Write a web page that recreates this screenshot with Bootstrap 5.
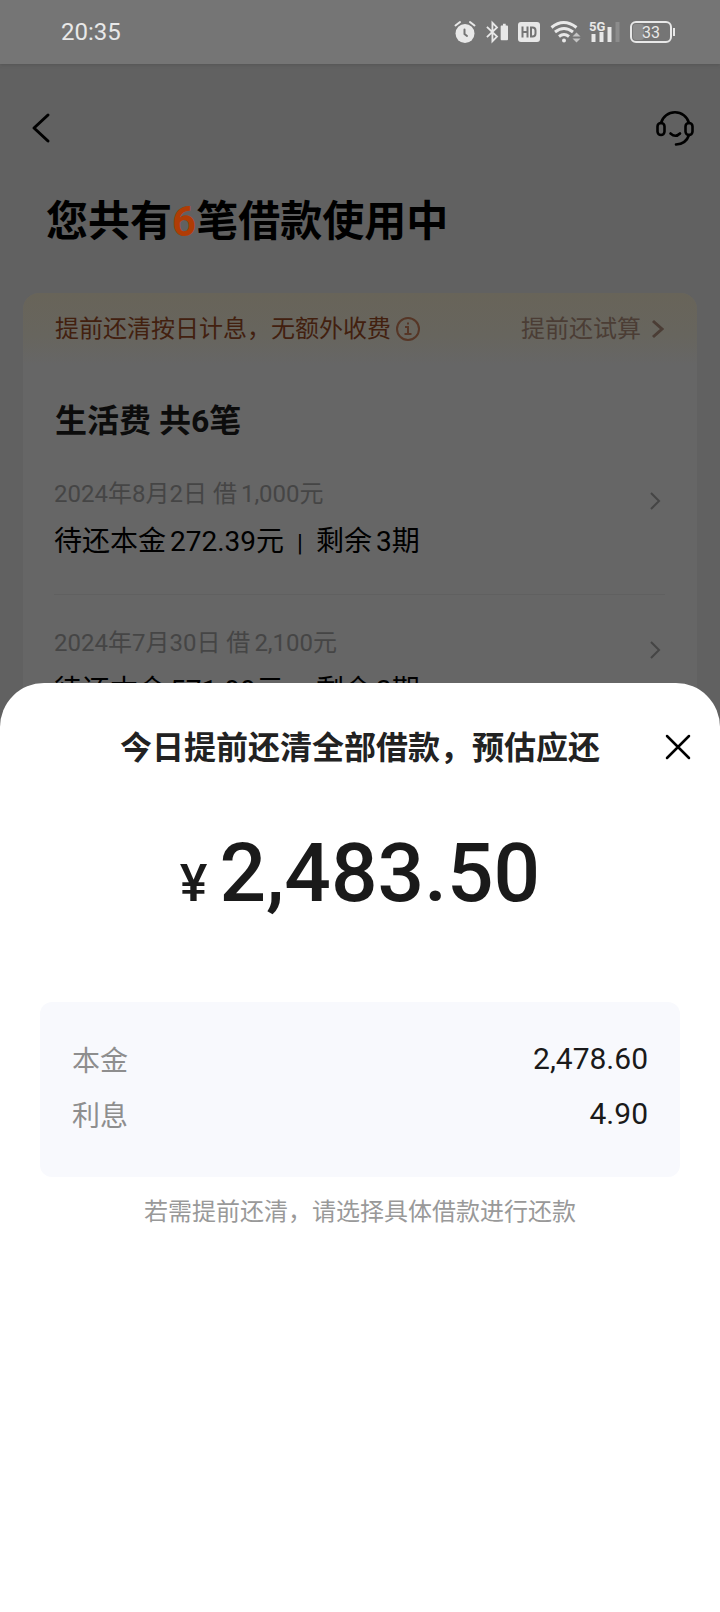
<!DOCTYPE html>
<html lang="zh-CN">
<head>
<meta charset="utf-8">
<meta name="viewport" content="width=device-width, initial-scale=1">
<title>借款</title>
<link rel="stylesheet" href="https://cdn.jsdelivr.net/npm/bootstrap@5.3.0/dist/css/bootstrap.min.css">
<style>
  body { background: #616161; color: #000; font-family: Roboto, "Noto Sans CJK SC", sans-serif; overflow: hidden; }
  svg { display: block; flex: none; fill: none; overflow: visible; }
  .statusbar { background: #757575; height: 64px; padding: 0 44px 0 61px; color: #e8e8e8; font-size: 24px; box-shadow: 0 1px 3px #555; }
  .statusbar .status-icons { gap: 10px; }
  .topbar { height: 130px; padding: 0 25px 2px 28px; }
  .page-title { font-size: 42px; line-height: 56px; padding: 0 46px; margin: 0 0 43px; font-weight: 700; }
  .page-title span { color: #b03c05; }
  .loans { margin: 0 23px; background: #666; border-radius: 16px; overflow: hidden; height: 600px; }
  .notice { height: 72px; padding: 0 32px; font-size: 24px; color: #42200f; background: linear-gradient(#686459, #67655e 60%, #666); }
  .notice a { color: #4b3d35; gap: 10px; }
  .loans h2 { font-size: 32px; line-height: 44px; font-weight: 700; margin: 0; padding: 34px 32px 26px; color: #0c0c0c; }
  .loan { margin: 0 32px 0 31px; height: 149px; padding: 9px 4px 0 0; color: #000; }
  .loan + .loan { border-top: 1px solid #606060; padding-top: 32px; }
  .loan .date { font-size: 24px; line-height: 32px; color: #454545; }
  .loan .rest { font-size: 28px; line-height: 40px; margin-top: 12px; }
  .loan .num { padding-left: 4px; }
  .loan .bar { font-size: 24px; padding: 0 13px; }
  .loans .first-loan { height: 125px; }
  .loan svg { margin-top: 14px; }
  .sheet { background: #fff; color: #1a1a1a; border-radius: 44px 44px 0 0; padding: 40px 40px 384px; }
  .sheet-title { font-size: 32px; line-height: 50px; font-weight: 700; margin: 0; color: #222; }
  .close-btn { right: 22px; top: 44px; padding: 8px; }
  .amount { font-size: 82px; line-height: 100px; font-weight: 500; margin: 50px 0 68px; }
  .amount span { font-size: 52px; margin-right: 12px; }
  .detail { background: #f8f9fd; border-radius: 12px; padding: 32px; height: 175px; font-size: 28px; line-height: 55px; }
  .detail dt { font-weight: 400; color: #8e8e8e; }
  .detail dd { margin: 0; font-size: 30px; line-height: 50px; }
  .hint { font-size: 24px; line-height: 32px; color: #999; margin: 19px 0 0; }
</style>
</head>
<body>
<header class="statusbar d-flex align-items-center justify-content-between">
  <time>20:35</time>
  <div class="status-icons d-flex align-items-center">
    <svg width="22" height="24" viewBox="0 0 22 24" stroke="#e8e8e8" stroke-width="2" stroke-linecap="round"><circle cx="11" cy="13.500" r="9.500" fill="#e8e8e8" stroke="none"/><path d="M1.500 5.500 6 2M20.500 5.500 16 2"/><path d="M10.500 9.500v4.500l2.500 2" stroke="#757575"/></svg>
    <svg width="22" height="24" viewBox="0 0 24 24" stroke="#e8e8e8" stroke-width="2"><path d="M1 6.500 12 17l-5 5V2l5 5L1 17.500"/><path d="M17 5h1.500V3h3v2H23q1 0 1 1v14q0 1-1 1h-6q-1 0-1-1V6q0-1 1-1z" fill="#e8e8e8" stroke="none"/></svg>
    <svg width="22" height="20" viewBox="0 0 22 20"><rect width="22" height="20" rx="3" fill="#e8e8e8"/><path d="M4.500 4.500v11M9.500 4.500v11M4.500 10h5M13 5.500v9h1.500q3 0 3-3v-3q0-3-3-3z" stroke="#757575" stroke-width="2"/></svg>
    <svg width="29" height="24" viewBox="0 0 29 24" stroke="#e8e8e8" stroke-width="3"><path d="M1.500 7.500q12-10 25 0M5 12q9-7 18 0M9 16.500q5-4 10 0"/><circle cx="14" cy="20.500" r="2" fill="#e8e8e8" stroke="none"/><path d="m22.500 16.500 4-4 4 4zM22.500 18.500l4 4 4-4z" fill="#c4c4c4" stroke="none"/></svg>
    <svg width="31" height="24" viewBox="0 0 31 24"><path d="M2.500 14h4v8h-4zM10.500 12h4v10h-4zM18.500 7h4v15h-4z" fill="#e8e8e8"/><path d="M26.500 2h4v20h-4z" fill="#8c8c8c"/><text x="0" y="11" font-size="13" font-weight="700" fill="#e8e8e8" font-family="Roboto">5G</text></svg>
    <svg width="46" height="22" viewBox="0 0 46 22"><rect x="1" y="1" width="40" height="20" rx="5" stroke="#e8e8e8" stroke-width="2"/><rect x="3" y="3" width="11" height="16" rx="3" fill="#8c8c8c"/><path d="M44 7v8" stroke="#e8e8e8" stroke-width="2"/><text x="21" y="17" font-size="16" text-anchor="middle" fill="#e8e8e8" font-family="Roboto">33</text></svg>
  </div>
</header>

<main>
  <nav class="topbar d-flex align-items-center justify-content-between">
    <button class="btn p-0 border-0" type="button" aria-label="返回"><svg width="26" height="32" viewBox="0 0 26 32" stroke="#000" stroke-width="3" stroke-linecap="round" stroke-linejoin="round"><path d="M20 3 6 16l14 13"/></svg></button>
    <button class="btn p-0 border-0" type="button" aria-label="客服"><svg width="40" height="36" viewBox="0 0 40 36" stroke="#000" stroke-width="2.600" stroke-linecap="round"><rect x="2.500" y="13" width="7" height="12" rx="3.500"/><rect x="30.500" y="13" width="7" height="12" rx="3.500"/><path d="M6 13a14.500 14.500 0 0 1 28 0M34 25q-3 9-13 9.500M15.500 23.500q5 4.500 9.500 0"/></svg></button>
  </nav>
  <h1 class="page-title">您共有<span>6</span>笔借款使用中</h1>

  <section class="loans">
    <div class="notice d-flex align-items-center">
      <span>提前还清按日计息，无额外收费</span>
      <svg class="ms-1" width="26" height="24" viewBox="-1 0 26 24" stroke="#563626" stroke-width="2"><circle cx="12" cy="12" r="11"/><path d="M9 10h3v7M8.500 17h7M11 6.500h2"/></svg>
      <a class="ms-auto d-flex align-items-center text-decoration-none" href="#">提前还试算 <svg width="14" height="20" viewBox="0 0 14 20" stroke="#4b3d35" stroke-width="3"><path d="m2 2 9 8-9 8"/></svg></a>
    </div>
    <h2>生活费 共6笔</h2>
    <a class="loan first-loan d-flex justify-content-between text-decoration-none" href="#">
      <div><div class="date">2024年8月2日 借<span class="num">1,000元</span></div><div class="rest">待还本金<span class="num">272.39</span>元<span class="bar">|</span>剩余<span class="num">3</span>期</div></div>
      <svg width="12" height="18" viewBox="0 0 12 18" stroke="#454545" stroke-width="2"><path d="m2 1 8 8-8 8"/></svg>
    </a>
    <a class="loan d-flex justify-content-between text-decoration-none" href="#">
      <div><div class="date">2024年7月30日 借<span class="num">2,100元</span></div><div class="rest">待还本金<span class="num">571.99</span>元<span class="bar">|</span>剩余<span class="num">3</span>期</div></div>
      <svg width="12" height="18" viewBox="0 0 12 18" stroke="#454545" stroke-width="2"><path d="m2 1 8 8-8 8"/></svg>
    </a>
  </section>
</main>

<section class="sheet fixed-bottom text-center" role="dialog" aria-labelledby="sheetTitle">
  <h2 class="sheet-title" id="sheetTitle">今日提前还清全部借款，预估应还</h2>
  <button class="close-btn btn border-0 position-absolute" type="button" aria-label="关闭"><svg width="24" height="24" viewBox="0 0 24 24" stroke="#000" stroke-width="2.500" stroke-linecap="round"><path d="m1 1 22 22M23 1 1 23"/></svg></button>
  <p class="amount"><span>¥</span>2,483.50</p>
  <dl class="detail mb-0">
    <div class="d-flex justify-content-between"><dt>本金</dt><dd>2,478.60</dd></div>
    <div class="d-flex justify-content-between"><dt>利息</dt><dd>4.90</dd></div>
  </dl>
  <p class="hint">若需提前还清，请选择具体借款进行还款</p>
</section>
<script src="https://cdn.jsdelivr.net/npm/bootstrap@5.3.0/dist/js/bootstrap.bundle.min.js"></script>
</body>
</html>
